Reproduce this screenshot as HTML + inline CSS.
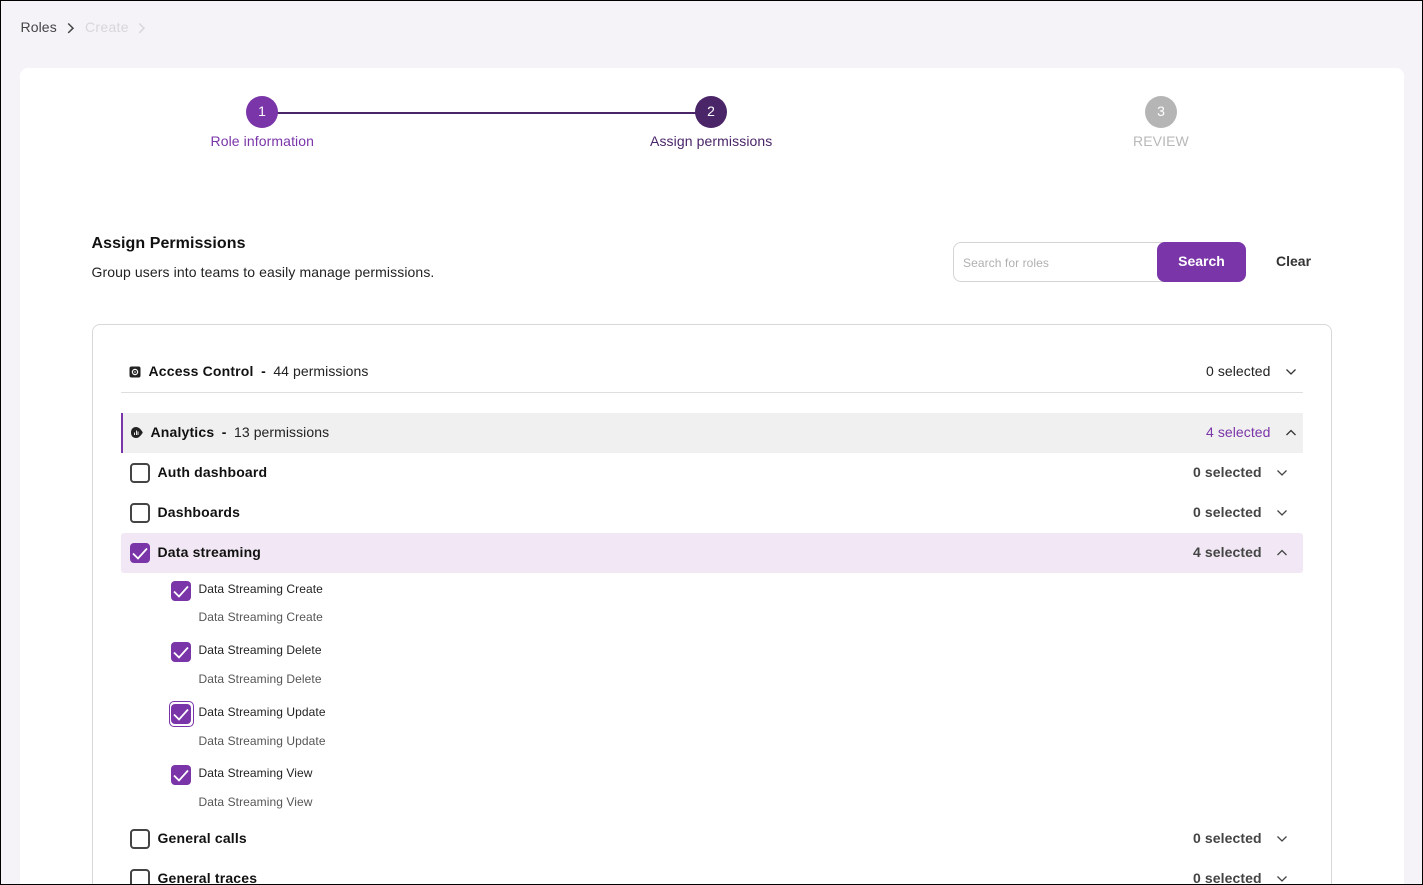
<!DOCTYPE html>
<html>
<head>
<meta charset="utf-8">
<style>
html,body{margin:0;padding:0;width:1423px;height:885px;overflow:hidden}
#root{position:absolute;left:0;top:0;width:1423px;height:885px;overflow:hidden;background:#f5f3f8;font-family:"Liberation Sans",sans-serif;color:#111}
#frame{position:absolute;left:0;top:0;width:1421px;height:883px;border:1px solid #000;z-index:50;pointer-events:none}
.a{position:absolute;white-space:nowrap;line-height:18px}
.card{position:absolute;left:20px;top:68px;width:1384px;height:840px;background:#fff;border-radius:8px}
.circle{position:absolute;width:32px;height:32px;border-radius:50%;color:#fff;font-size:14px;line-height:31px;text-align:center;top:96px}
.box{position:absolute;left:92px;top:324px;width:1238px;height:600px;border:1px solid #d8d8d8;border-radius:8px;background:#fff}
.cb{position:absolute;box-sizing:border-box;width:20px;height:20px;border-radius:4px;background:#7a35a8}
.cb svg{position:absolute;left:0;top:0}
.un{position:absolute;box-sizing:border-box;left:130px;width:20px;height:20px;border:2px solid #444;border-radius:4px;background:#fff}
.gt{font-size:14px;font-weight:700;color:#111;letter-spacing:.17px}
.gt span{letter-spacing:.07px}
.sel{font-size:14px;font-weight:700;color:#444;letter-spacing:.1px}
.t{font-size:12px;color:#222;letter-spacing:.08px}
.d{font-size:12px;color:#555;letter-spacing:.08px}
.m{letter-spacing:.1px}
svg.ch{position:absolute;width:12px;height:8px}
</style>
</head>
<body>
<div id="root">
<div id="frame"></div>
<div class="a" style="left:20.5px;top:18px;font-size:14px;color:#444;letter-spacing:.1px">Roles</div>
<svg style="position:absolute;left:66px;top:22px" width="10" height="12" viewBox="0 0 10 12"><path d="M2.2 1.5L7 6.2L2.2 10.9" fill="none" stroke="#444" stroke-width="1.5"/></svg>
<div class="a" style="left:85px;top:18px;font-size:14px;color:#d8d6d8;letter-spacing:.3px">Create</div>
<svg style="position:absolute;left:136.5px;top:22px" width="10" height="12" viewBox="0 0 10 12"><path d="M2.2 1.5L7 6.2L2.2 10.9" fill="none" stroke="#d8d6d8" stroke-width="1.5"/></svg>

<div class="card"></div>
<div style="position:absolute;left:262px;top:112px;width:449px;height:2px;background:#4a2568"></div>
<div class="circle" style="left:246px;background:#7a35a8">1</div>
<div class="circle" style="left:695px;background:#4a2568">2</div>
<div class="circle" style="left:1145px;background:#b5b5b5">3</div>
<div class="a m" style="left:210.5px;top:132px;font-size:14px;color:#7a35a8">Role information</div>
<div class="a m" style="left:650px;top:132px;font-size:14px;color:#4a2568">Assign permissions</div>
<div class="a m" style="left:1133px;top:132px;font-size:14px;color:#b8b8b8">REVIEW</div>

<div class="a" style="left:91.5px;top:235px;font-size:16px;font-weight:700;color:#111;letter-spacing:.06px">Assign Permissions</div>
<div class="a" style="left:91.5px;top:263px;font-size:14px;color:#222;letter-spacing:.1px">Group users into teams to easily manage permissions.</div>

<div style="position:absolute;box-sizing:border-box;left:953px;top:242px;width:220px;height:40px;border:1px solid #d4d4d4;border-radius:8px;background:#fff"></div>
<div class="a" style="left:963px;top:254px;font-size:12px;color:#b0b0b0;letter-spacing:.08px">Search for roles</div>
<div style="position:absolute;left:1157px;top:242px;width:89px;height:40px;background:#7a35a8;border-radius:8px;color:#fff;font-size:14px;font-weight:700;text-align:center;line-height:38px">Search</div>
<div class="a" style="left:1276px;top:252px;font-size:14px;font-weight:700;color:#333">Clear</div>

<div class="box"></div>

<svg style="position:absolute;left:129px;top:366px" width="12" height="12" viewBox="0 0 12 12"><rect x="0.5" y="0.5" width="11" height="11" rx="2" fill="#222"/><circle cx="6" cy="6" r="2.6" fill="none" stroke="#fff" stroke-width="1.2"/><circle cx="6" cy="6" r="0.8" fill="#fff"/></svg>
<div class="a gt" style="left:148.5px;top:362px">Access Control<span style="margin-left:7.5px">-</span><span style="font-weight:400;color:#222;margin-left:7.5px">44 permissions</span></div>
<div class="a m" style="left:1206px;top:362px;font-size:14px;color:#222;letter-spacing:.07px">0 selected</div>
<svg class="ch" style="left:1285px;top:368px" viewBox="0 0 12 8"><path d="M1.5 1.5L6 6L10.5 1.5" fill="none" stroke="#333" stroke-width="1.3"/></svg>
<div style="position:absolute;left:121px;top:392px;width:1182px;height:1px;background:#dedede"></div>

<div style="position:absolute;box-sizing:border-box;left:121px;top:413px;width:1182px;height:40px;background:#f0f0f0;border-left:2px solid #7a35a8"></div>
<svg style="position:absolute;left:130px;top:426px" width="13" height="13" viewBox="0 0 13 13"><path d="M1 6.5C1 3 3 1 6 1C9 1 11 3.5 12.8 6.5C11 9.5 9 12 6 12C3 12 1 10 1 6.5Z" fill="#222"/><path d="M4.5 6.5V9M6.5 4.5V9M8 5.5V9" stroke="#fff" stroke-width="0.9"/></svg>
<div class="a gt" style="left:150.5px;top:423px">Analytics<span style="margin-left:7.5px">-</span><span style="font-weight:400;color:#222;margin-left:7.5px">13 permissions</span></div>
<div class="a m" style="left:1206px;top:423px;font-size:14px;color:#7a35a8;letter-spacing:.07px">4 selected</div>
<svg class="ch" style="left:1285px;top:429px" viewBox="0 0 12 8"><path d="M1.5 6L6 1.5L10.5 6" fill="none" stroke="#333" stroke-width="1.3"/></svg>

<div class="un" style="top:463px"></div>
<div class="a gt" style="left:157.5px;top:463px">Auth dashboard</div>
<div class="a sel" style="left:1193px;top:463px">0 selected</div>
<svg class="ch" style="left:1276px;top:469px" viewBox="0 0 12 8"><path d="M1.5 1.5L6 6L10.5 1.5" fill="none" stroke="#444" stroke-width="1.3"/></svg>

<div class="un" style="top:503px"></div>
<div class="a gt" style="left:157.5px;top:503px">Dashboards</div>
<div class="a sel" style="left:1193px;top:503px">0 selected</div>
<svg class="ch" style="left:1276px;top:509px" viewBox="0 0 12 8"><path d="M1.5 1.5L6 6L10.5 1.5" fill="none" stroke="#444" stroke-width="1.3"/></svg>

<div style="position:absolute;left:121px;top:533px;width:1182px;height:40px;background:#f2e7f4;border-radius:3px"></div>
<div class="cb" style="left:130px;top:543px"><svg width="20" height="20" viewBox="0 0 20 20"><path d="M3 10.5L8 15.5L17 5.5" fill="none" stroke="#fff" stroke-width="1.8"/></svg></div>
<div class="a gt" style="left:157.5px;top:543px">Data streaming</div>
<div class="a sel" style="left:1193px;top:543px">4 selected</div>
<svg class="ch" style="left:1276px;top:549px" viewBox="0 0 12 8"><path d="M1.5 6L6 1.5L10.5 6" fill="none" stroke="#444" stroke-width="1.3"/></svg>

<div class="cb" style="left:171px;top:581px"><svg width="20" height="20" viewBox="0 0 20 20"><path d="M3 10.5L8 15.5L17 5.5" fill="none" stroke="#fff" stroke-width="1.8"/></svg></div>
<div class="a t" style="left:198.5px;top:580px">Data Streaming Create</div>
<div class="a d" style="left:198.5px;top:608px">Data Streaming Create</div>

<div class="cb" style="left:171px;top:642px"><svg width="20" height="20" viewBox="0 0 20 20"><path d="M3 10.5L8 15.5L17 5.5" fill="none" stroke="#fff" stroke-width="1.8"/></svg></div>
<div class="a t" style="left:198.5px;top:641px">Data Streaming Delete</div>
<div class="a d" style="left:198.5px;top:670px">Data Streaming Delete</div>

<div style="position:absolute;box-sizing:border-box;left:168.5px;top:701px;width:25px;height:26px;border:1px solid #7a35a8;border-radius:5px;background:#fff"></div>
<div class="cb" style="left:171px;top:704px"><svg width="20" height="20" viewBox="0 0 20 20"><path d="M3 10.5L8 15.5L17 5.5" fill="none" stroke="#fff" stroke-width="1.8"/></svg></div>
<div class="a t" style="left:198.5px;top:703px">Data Streaming Update</div>
<div class="a d" style="left:198.5px;top:732px">Data Streaming Update</div>

<div class="cb" style="left:171px;top:765px"><svg width="20" height="20" viewBox="0 0 20 20"><path d="M3 10.5L8 15.5L17 5.5" fill="none" stroke="#fff" stroke-width="1.8"/></svg></div>
<div class="a t" style="left:198.5px;top:764px">Data Streaming View</div>
<div class="a d" style="left:198.5px;top:793px">Data Streaming View</div>

<div class="un" style="top:829px"></div>
<div class="a gt" style="left:157.5px;top:829px">General calls</div>
<div class="a sel" style="left:1193px;top:829px">0 selected</div>
<svg class="ch" style="left:1276px;top:835px" viewBox="0 0 12 8"><path d="M1.5 1.5L6 6L10.5 1.5" fill="none" stroke="#444" stroke-width="1.3"/></svg>

<div class="un" style="top:869px"></div>
<div class="a gt" style="left:157.5px;top:869px">General traces</div>
<div class="a sel" style="left:1193px;top:869px">0 selected</div>
<svg class="ch" style="left:1276px;top:875px" viewBox="0 0 12 8"><path d="M1.5 1.5L6 6L10.5 1.5" fill="none" stroke="#444" stroke-width="1.3"/></svg>
</div>
</body>
</html>
